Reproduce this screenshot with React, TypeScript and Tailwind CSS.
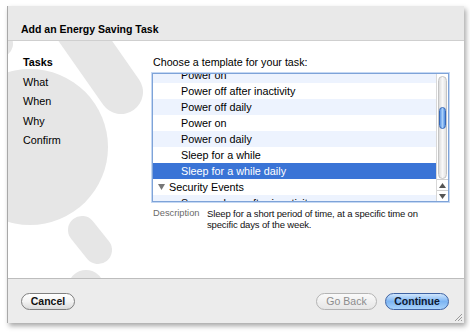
const rows = [
  { label: 'Power on', kind: 'item' },
  { label: 'Power off after inactivity', kind: 'item' },
  { label: 'Power off daily', kind: 'item' },
  { label: 'Power on', kind: 'item' },
  { label: 'Power on daily', kind: 'item' },
  { label: 'Sleep for a while', kind: 'item' },
  { label: 'Sleep for a while daily', kind: 'item', selected: true },
  { label: 'Security Events', kind: 'group' },
  { label: 'Secure sleep after inactivity', kind: 'item' },
];

const steps = ['Tasks', 'What', 'When', 'Why', 'Confirm'];

const Watermark = () => (
  <svg className="absolute inset-0 pointer-events-none" width="456" height="237" viewBox="0 0 456 237">
    <g transform="translate(-8,-41)" fill="#e6e6e6" stroke="#e6e6e6" strokeLinecap="round">
      <circle cx="30" cy="147" r="78" stroke="none" />
      <line x1="72" y1="22" x2="121" y2="92" strokeWidth="44" />
      <line x1="-14" y1="22" x2="0" y2="44" strokeWidth="26" />
      <line x1="82" y1="230" x2="98" y2="250" strokeWidth="28" />
      <circle cx="86" cy="288" r="18" stroke="none" />
    </g>
  </svg>
);

const Scrollbar = () => (
  <div className="w-[12px] flex flex-col bg-white border-l border-[#d8d8d8]">
    <div className="flex-1 mx-[1px] mt-[2px] rounded-full bg-gradient-to-r from-[#dcdcdc] via-[#f8f8f8] to-[#e2e2e2] border border-[#c4c4c4] relative">
      <div className="absolute left-[0px] right-[0px] top-[30px] h-[22px] rounded-full border border-[#3769b8] bg-gradient-to-r from-[#5b95e4] via-[#a9d0fa] to-[#4e8ce0]" />
    </div>
    <div className="h-[11px] flex items-center justify-center border-t border-[#d0d0d0]">
      <svg width="7" height="5" viewBox="0 0 7 5"><path d="M3.5 0 L7 5 L0 5 Z" fill="#555" /></svg>
    </div>
    <div className="h-[11px] flex items-center justify-center border-t border-[#d0d0d0]">
      <svg width="7" height="5" viewBox="0 0 7 5"><path d="M0 0 L7 0 L3.5 5 Z" fill="#555" /></svg>
    </div>
  </div>
);

export default function App() {
  return (
    <div className="w-[470px] h-[336px] bg-white pl-[7px] pt-[6px] font-['Liberation_Sans',Arial,sans-serif] text-black">
      <div className="w-[457px] h-[317px] flex flex-col border-l border-[#a8a8a8] shadow-[2px_3px_5px_rgba(0,0,0,0.35)]">
        <div className="h-[35px] bg-[#e9e9e9] border-b border-[#cfcfcf] pl-[13px] pt-[17px]">
          <div className="text-[10.5px] font-bold leading-[12px]">Add an Energy Saving Task</div>
        </div>

        <div className="relative flex-1 bg-white flex overflow-hidden">
          <Watermark />
          <div className="relative w-[144px] pl-[15px] pt-[12px]">
            {steps.map((s, i) => (
              <div key={s} className={`text-[10.8px] leading-[19.5px] ${i === 0 ? 'font-bold' : ''}`}>
                {s}
              </div>
            ))}
          </div>

          <div className="relative pt-[12px]">
            <div className="text-[10.7px] leading-[19px] pl-[1px] mb-[1px]">Choose a template for your task:</div>
            <div className="w-[297px] h-[129px] border border-[#7ea3d8] shadow-[0_0_0_1px_#c5d8f3] flex bg-white">
              <div className="flex-1 overflow-hidden">
                <div className="-mt-[7px] flex flex-col">
                  {rows.map((r, i) => {
                    const bg = r.selected ? 'bg-[#3a74d6] text-white' : i % 2 === 0 ? 'bg-[#edf3fe]' : 'bg-white';
                    return (
                      <div key={i} className={`h-[16px] flex items-center text-[10.8px] ${bg} ${r.kind === 'group' ? 'pl-[5px]' : 'pl-[28px]'}`}>
                        {r.kind === 'group' && (
                          <svg width="7" height="6" viewBox="0 0 7 6" className="mr-[4px]">
                            <path d="M0 0 L7 0 L3.5 6 Z" fill="#777" />
                          </svg>
                        )}
                        {r.label}
                      </div>
                    );
                  })}
                </div>
              </div>
              <Scrollbar />
            </div>

            <div className="flex mt-[6px] pl-[1px]">
              <div className="w-[54px] text-[9.3px] leading-[11px] text-[#6a6a6a]">Description</div>
              <div className="w-[226px] text-[9.5px] tracking-[-0.15px] leading-[11px] text-[#111]">
                Sleep for a short period of time, at a specific time on specific days of the week.
              </div>
            </div>
          </div>
        </div>

        <div className="relative h-[45px] bg-[#ececec] border-t border-[#bdbdbd] flex items-start pt-[14px] pl-[13px] pr-[15px]">
          <button className="w-[54px] h-[17px] rounded-full border border-[#7f7f7f] bg-gradient-to-b from-white via-[#f3f3f3] to-[#dadada] text-[10.5px] font-bold leading-[15px] text-[#111]">
            Cancel
          </button>
          <div className="flex-1" />
          <button className="w-[61px] h-[17px] rounded-full border border-[#b4b4b4] bg-gradient-to-b from-[#fafafa] to-[#e6e6e6] text-[10.5px] leading-[15px] text-[#8c8c8c]">
            Go Back
          </button>
          <button className="ml-[8px] w-[64px] h-[17px] rounded-full border border-[#3f63a3] bg-gradient-to-b from-[#d0e6fc] via-[#7db5f3] to-[#a9d3fb] text-[10.5px] font-bold leading-[15px] text-[#0d1a33]">
            Continue
          </button>
          <svg className="absolute right-[1px] bottom-[1px]" width="9" height="9" viewBox="0 0 9 9">
            <path d="M8 1 L1 8 M8 4 L4 8 M8 7 L7 8" stroke="#9a9a9a" strokeWidth="1" />
          </svg>
        </div>
      </div>
    </div>
  );
}
